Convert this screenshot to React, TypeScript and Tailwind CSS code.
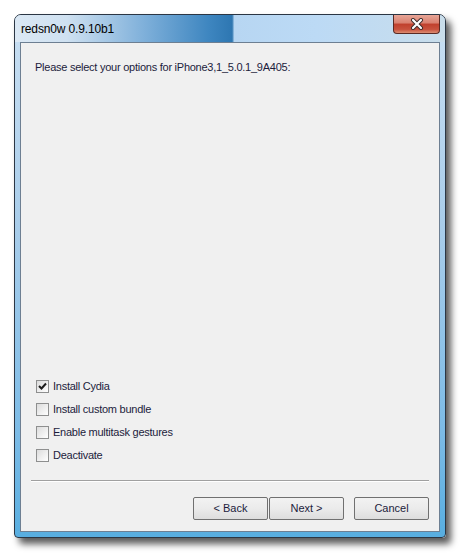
import React from 'react';

const options = [
  { label: 'Install Cydia', checked: true },
  { label: 'Install custom bundle', checked: false },
  { label: 'Enable multitask gestures', checked: false },
  { label: 'Deactivate', checked: false },
];

const Checkbox: React.FC<{ checked: boolean }> = ({ checked }) => (
  <div className="w-[13px] h-[13px] border border-[#8e8f8f] bg-gradient-to-br from-[#dcdcdc] to-white flex items-center justify-center">
    {checked && (
      <svg width="9" height="9" viewBox="0 0 9 9">
        <path d="M1 4 L3.5 6.5 L8 1.5" stroke="#1c1c1c" strokeWidth="2" fill="none" />
      </svg>
    )}
  </div>
);

const WinButton: React.FC<{ label: string; className?: string }> = ({ label, className }) => (
  <button
    className={`w-[75px] h-[23px] border border-[#707070] rounded-[2px] bg-gradient-to-b from-[#f2f2f2] via-[#ebebeb] to-[#dddddd] text-[11px] text-[#1c1c3c] flex items-center justify-center ${className ?? ''}`}
  >
    {label}
  </button>
);

export default function App() {
  return (
    <div className="w-[461px] h-[553px] bg-white pt-[14px] pl-[14px]" style={{ fontFamily: '"Liberation Sans", Arial, sans-serif' }}>
      {/* window frame */}
      <div className="relative w-[432px] h-[524px] rounded-t-[7px] rounded-b-[4px] border border-[#2b3644] shadow-[5px_6px_7px_rgba(0,0,0,0.65)] bg-[linear-gradient(180deg,#c9dff2_0%,#a9cdea_40%,#7cbbe6_80%,#58aee0_100%)] flex flex-col">
        {/* title bar */}
        <div className="h-[27px] shrink-0 rounded-t-[6px] bg-[linear-gradient(90deg,#dbe8f4_0%,#cfe1f1_12%,#7fb0da_30%,#3e86c0_45%,#2f78b3_50%,#2e76b0_50.5%,#b7d6f2_51%,#bcdaf5_70%,#c4dcef_90%,#c9ddea_100%)] flex items-center pl-[6px] relative">
          <span className="text-[12px] text-black tracking-[-0.15px]">redsn0w 0.9.10b1</span>
          {/* close */}
          <div className="absolute right-[5px] top-0 w-[47px] h-[19px] rounded-b-[4px] border border-[#5a2a24] border-t-0 bg-[linear-gradient(180deg,#e7a597_0%,#d9806f_45%,#c0402d_50%,#c8523e_80%,#dc8d72_100%)] flex items-center justify-center">
            <svg width="14" height="12" viewBox="0 0 14 12">
              <path d="M3 2 L11 10 M11 2 L3 10" stroke="#3b2a2a" strokeWidth="4" strokeLinecap="round" />
              <path d="M3 2 L11 10 M11 2 L3 10" stroke="#ffffff" strokeWidth="2.2" strokeLinecap="round" />
            </svg>
          </div>
        </div>

        {/* client area */}
        <div className="mx-[5px] mb-[5px] flex-1 border border-[#6d7f92] bg-[#f0f0f0] flex flex-col text-[11px] text-[#1c1c3c] tracking-[-0.25px]">
          <div className="pl-[14px] pt-[16px]">Please select your options for iPhone3,1_5.0.1_9A405:</div>

          <div className="flex-1" />

          <div className="pl-[15px] flex flex-col gap-[10px]">
            {options.map((o) => (
              <div key={o.label} className="flex items-center gap-[4px] h-[13px]">
                <Checkbox checked={o.checked} />
                <span>{o.label}</span>
              </div>
            ))}
          </div>

          <div className="mx-[10px] mt-[18px] border-t border-[#a0a0a0] border-b border-b-white" />

          <div className="flex justify-end pr-[10px] mt-[15px] mb-[11px] tracking-normal">
            <WinButton label="< Back" />
            <WinButton label="Next >" className="ml-px" />
            <WinButton label="Cancel" className="ml-[10px]" />
          </div>
        </div>
      </div>
    </div>
  );
}
